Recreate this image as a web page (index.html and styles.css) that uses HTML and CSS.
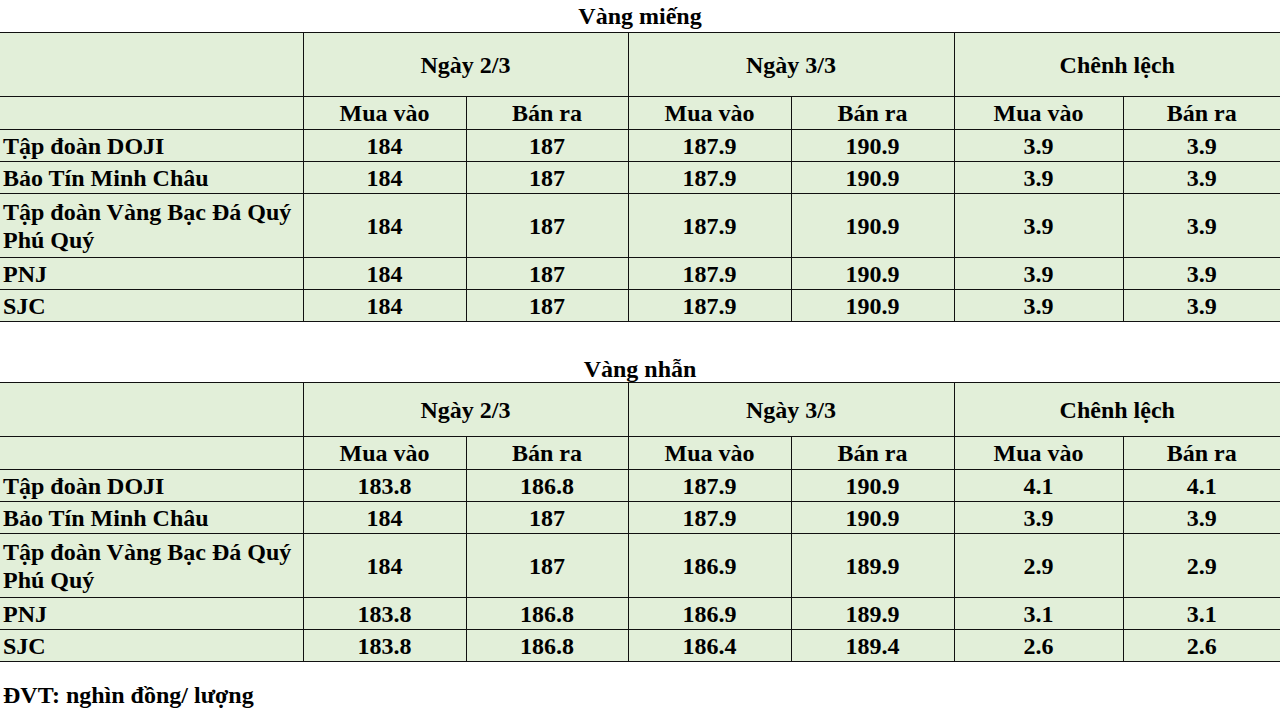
FILE: index.html
```html
<!DOCTYPE html>
<html lang="vi">
<head>
<meta charset="utf-8">
<title>Giá vàng</title>
<link rel="stylesheet" href="styles.css">
</head>
<body>
<div class="title">Vàng miếng</div>
<table class="price">
  <colgroup>
    <col class="c-name"><col class="c-a"><col class="c-b"><col class="c-a"><col class="c-a"><col class="c-c"><col class="c-d">
  </colgroup>
  <tr class="h1 tall">
    <td class="first"></td>
    <td colspan="2">Ngày 2/3</td>
    <td colspan="2">Ngày 3/3</td>
    <td colspan="2" class="last">Chênh lệch</td>
  </tr>
  <tr class="h2">
    <td class="first"></td>
    <td>Mua vào</td><td>Bán ra</td><td>Mua vào</td><td>Bán ra</td><td>Mua vào</td><td class="last">Bán ra</td>
  </tr>
  <tr class="row"><td class="first name">Tập đoàn DOJI</td><td>184</td><td>187</td><td>187.9</td><td>190.9</td><td>3.9</td><td class="last">3.9</td></tr>
  <tr class="row"><td class="first name">Bảo Tín Minh Châu</td><td>184</td><td>187</td><td>187.9</td><td>190.9</td><td>3.9</td><td class="last">3.9</td></tr>
  <tr class="row dbl"><td class="first name">Tập đoàn Vàng Bạc Đá Quý<br>Phú Quý</td><td>184</td><td>187</td><td>187.9</td><td>190.9</td><td>3.9</td><td class="last">3.9</td></tr>
  <tr class="row"><td class="first name">PNJ</td><td>184</td><td>187</td><td>187.9</td><td>190.9</td><td>3.9</td><td class="last">3.9</td></tr>
  <tr class="row"><td class="first name">SJC</td><td>184</td><td>187</td><td>187.9</td><td>190.9</td><td>3.9</td><td class="last">3.9</td></tr>
</table>

<div class="title second">Vàng nhẫn</div>
<table class="price">
  <colgroup>
    <col class="c-name"><col class="c-a"><col class="c-b"><col class="c-a"><col class="c-a"><col class="c-c"><col class="c-d">
  </colgroup>
  <tr class="h1 short">
    <td class="first"></td>
    <td colspan="2">Ngày 2/3</td>
    <td colspan="2">Ngày 3/3</td>
    <td colspan="2" class="last">Chênh lệch</td>
  </tr>
  <tr class="h2">
    <td class="first"></td>
    <td>Mua vào</td><td>Bán ra</td><td>Mua vào</td><td>Bán ra</td><td>Mua vào</td><td class="last">Bán ra</td>
  </tr>
  <tr class="row"><td class="first name">Tập đoàn DOJI</td><td>183.8</td><td>186.8</td><td>187.9</td><td>190.9</td><td>4.1</td><td class="last">4.1</td></tr>
  <tr class="row"><td class="first name">Bảo Tín Minh Châu</td><td>184</td><td>187</td><td>187.9</td><td>190.9</td><td>3.9</td><td class="last">3.9</td></tr>
  <tr class="row dbl"><td class="first name">Tập đoàn Vàng Bạc Đá Quý<br>Phú Quý</td><td>184</td><td>187</td><td>186.9</td><td>189.9</td><td>2.9</td><td class="last">2.9</td></tr>
  <tr class="row"><td class="first name">PNJ</td><td>183.8</td><td>186.8</td><td>186.9</td><td>189.9</td><td>3.1</td><td class="last">3.1</td></tr>
  <tr class="row"><td class="first name">SJC</td><td>183.8</td><td>186.8</td><td>186.4</td><td>189.4</td><td>2.6</td><td class="last">2.6</td></tr>
</table>

<div class="unit">ĐVT: nghìn đồng/ lượng</div>
</body>
</html>
```

FILE: styles.css
```css
html, body {
  margin: 0;
  padding: 0;
  background: #ffffff;
}

body {
  font-family: "Liberation Serif", "Times New Roman", serif;
  font-weight: bold;
  font-size: 24px;
  color: #000;
}

.title {
  height: 32px;
  line-height: 32px;
  text-align: center;
  box-sizing: border-box;
}

.title.second {
  margin-top: 28px;
  padding-top: 4px;
  line-height: 30px;
  height: 32px;
}

.price {
  width: 1280px;
  border-collapse: collapse;
  table-layout: fixed;
  background: #e2efd9;
}

.c-name { width: 303px; }
.c-a { width: 163px; }
.c-b { width: 162px; }
.c-c { width: 169px; }
.c-d { width: 157px; }

.price td {
  border: 1px solid #111;
  padding: 0;
  text-align: center;
  vertical-align: middle;
  line-height: 26px;
  white-space: nowrap;
}

.price td.first { border-left: none; }
.price td.last { border-right: none; }

.price td.name {
  text-align: left;
  padding-left: 3px;
}

.h1.tall td { height: 63px; }
.h1.short td { height: 53px; }
.h2 td { height: 32px; }
.row td { height: 31px; }
.row.dbl td { height: 63px; line-height: 28px; }

.unit {
  margin-top: 18px;
  padding-left: 3px;
  line-height: 30px;
}
```
